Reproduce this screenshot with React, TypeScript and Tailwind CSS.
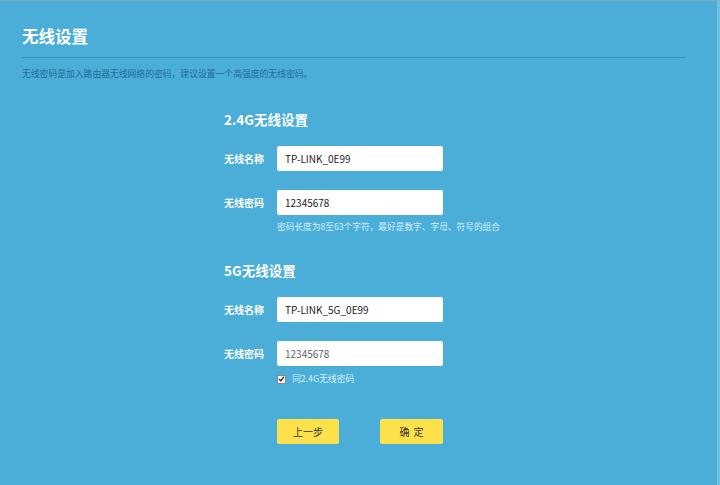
const font = {
  fontFamily: '"Noto Sans CJK SC", "Noto Sans", sans-serif',
};

const Field = ({ label, value, muted }: { label: string; value: string; muted?: boolean }) => (
  <div className="flex items-center h-[25px]">
    <span className="w-[53px] text-[10px] font-bold text-white">{label}</span>
    <div
      className={
        "w-[166px] h-[25px] bg-white rounded-[2px] flex items-center pl-[8px] text-[10px] " +
        (muted ? "text-[#666]" : "text-[#222]")
      }
    >
      {value}
    </div>
  </div>
);

export default function App() {
  return (
    <div
      className="w-[720px] h-[485px] bg-[#4aaed8] border-t border-t-[#7fa9bd] border-r-[3px] border-r-[#6fc0e2] overflow-hidden"
      style={font}
    >
      <div className="pl-[22px] pr-[32px]">
        <h1 className="pt-[24px] text-[16.5px] leading-[22px] font-bold text-white">无线设置</h1>
        <div className="mt-[10px] h-px bg-[#3591c2]" />
        <p className="mt-[10px] text-[8.8px] leading-[12px] text-[#1f6d9c]">
          无线密码是加入路由器无线网络的密码，建议设置一个高强度的无线密码。
        </p>
      </div>

      <div className="pl-[224px]">
        <h2 className="mt-[31px] text-[13.5px] leading-[16px] font-bold text-white">2.4G无线设置</h2>
        <div className="mt-[19px] flex flex-col gap-[19px]">
          <Field label="无线名称" value="TP-LINK_0E99" />
          <Field label="无线密码" value="12345678" />
        </div>
        <p className="ml-[53px] mt-[6px] text-[8.7px] leading-[12px] text-[#d6eef9]">
          密码长度为8至63个字符，最好是数字、字母、符号的组合
        </p>

        <h2 className="mt-[29px] text-[13.5px] leading-[16px] font-bold text-white">5G无线设置</h2>
        <div className="mt-[19px] flex flex-col gap-[19px]">
          <Field label="无线名称" value="TP-LINK_5G_0E99" />
          <Field label="无线密码" value="12345678" muted />
        </div>
        <div className="ml-[53px] mt-[7px] flex items-center gap-[6px] h-[12px]">
          <span className="w-[9px] h-[9px] bg-white border border-[#888] flex items-center justify-center">
            <svg viewBox="0 0 10 10" className="w-[8px] h-[8px]">
              <path d="M1.5 5 L4 7.5 L8.5 2" fill="none" stroke="#222" strokeWidth="1.8" />
            </svg>
          </span>
          <span className="text-[8.8px] text-[#d6eef9]">同2.4G无线密码</span>
        </div>

        <div className="ml-[53px] mt-[34px] flex gap-[41px]">
          <button className="w-[62px] h-[25px] bg-[#fde14a] rounded-[2px] text-[10px] text-[#333]">
            上一步
          </button>
          <button className="w-[63px] h-[25px] bg-[#fde14a] rounded-[2px] text-[10px] text-[#333] tracking-[4px] pl-[4px]">
            确定
          </button>
        </div>
      </div>
    </div>
  );
}
